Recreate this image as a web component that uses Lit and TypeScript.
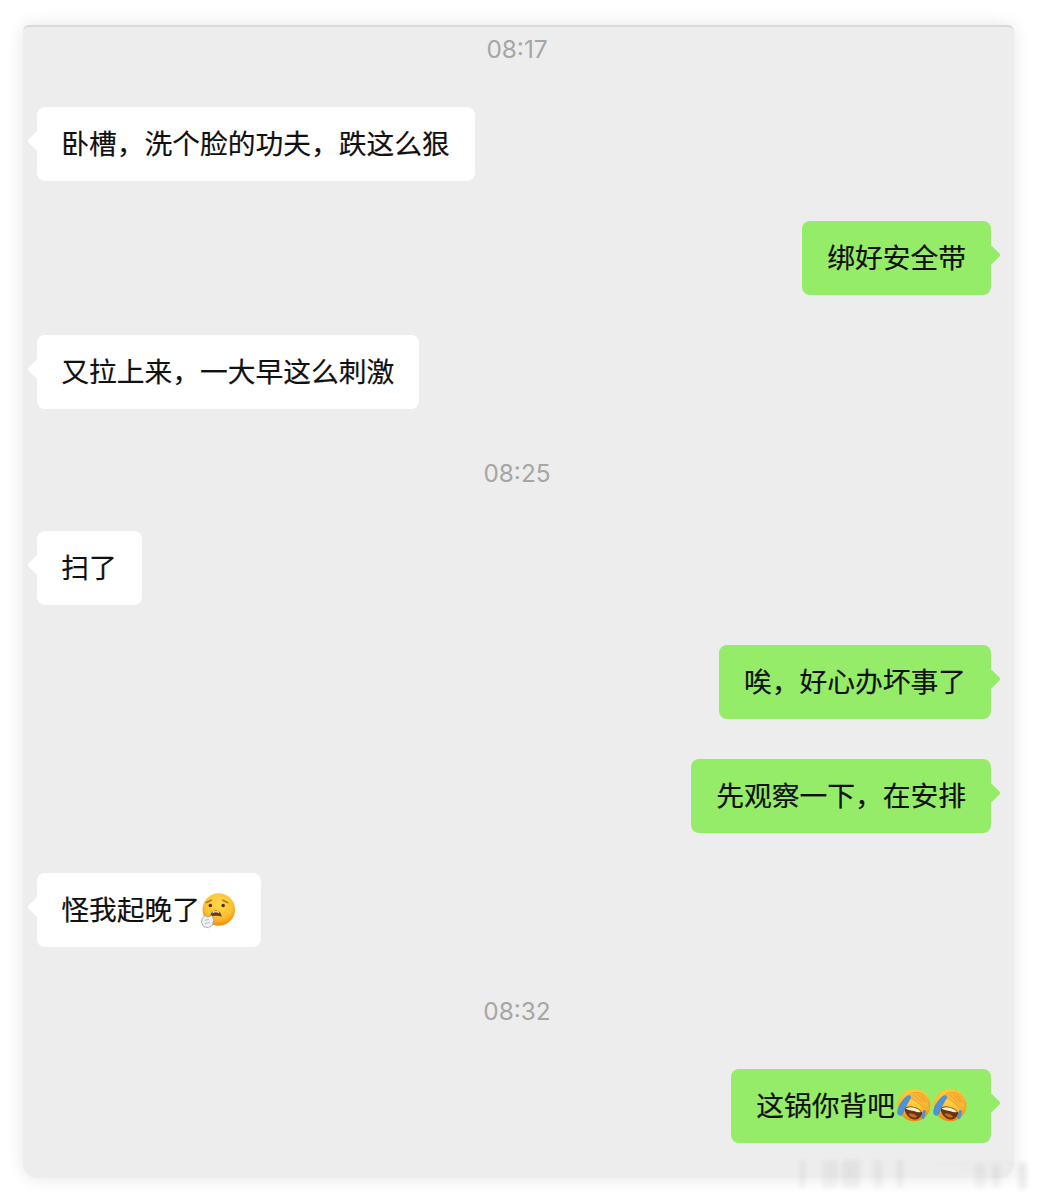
import { LitElement, html, css, svg } from "lit";
import { customElement } from "lit/decorators.js";

const sadEmoji = svg`
  <defs>
    <radialGradient id="sg" cx="50%" cy="32%" r="68%">
      <stop offset="0" stop-color="#ffd94e"/><stop offset=".65" stop-color="#fcc02e"/><stop offset="1" stop-color="#ee8c12"/>
    </radialGradient>
  </defs>
  <circle cx="19" cy="17.500" r="16.500" fill="url(#sg)"/>
  <path d="M6.500 10.500l5-2.500M28 10.500l-5-2.500" stroke="#a06a1c" stroke-width="1.300" stroke-linecap="round" fill="none"/>
  <circle cx="10.500" cy="13.500" r="1.800" fill="#4f2f10"/>
  <circle cx="23.500" cy="13.500" r="1.800" fill="#4f2f10"/>
  <path d="M10.500 25c-.2-3 2-6.500 5.500-6.500s6 3.500 6 6.500c-3-1.500-8.500-1.500-11.500 0z" fill="#6b3a12"/>
  <path d="M12.500 21.500c1.800-1.500 5.300-1.500 7.100 0l-.8-2.200h-5.500z" fill="#fff"/>
  <path d="M2 27l3-3.500 3 1.500 4-1.500 2 4.500-1.500 5.500-4 2.500-4.500-1-2.500-4z" fill="#eef0f2" stroke="#98a0a8" stroke-width=".8"/>
  <path d="M5 28.500l4-1M5 32l5-1.500" stroke="#aab0b6" stroke-width=".8"/>
`;

const cryEmoji = (id: string) => svg`
  <defs>
    <radialGradient id=${id} cx="50%" cy="30%" r="70%">
      <stop offset="0" stop-color="#ffd64a"/><stop offset=".65" stop-color="#fcbc2c"/><stop offset="1" stop-color="#ec8610"/>
    </radialGradient>
  </defs>
  <circle cx="19.500" cy="17" r="16.500" fill=${`url(#${id})`}/>
  <path d="M15 6c5-3 11-2.500 15 1.500 3 3 4.500 6.500 4.500 10-1.500 3-4 3-6 1.500-4-3.500-8.500-7-13-9-2-1-2-3-.5-4z" fill="#fbb73a" stroke="#e3901f" stroke-width=".6"/>
  <path d="M19 6.500l8 7.500M23 6l7 8M27 7l5 7.500" stroke="#e08a1e" stroke-width=".6" fill="none"/>
  <path d="M9.500 20c5.500-3 14-1.500 18.500 5 -2 5.500-6 7.500-10 6.500-4.500-1.300-8-6-8.500-11.500z" fill="#6a3410"/>
  <path d="M10.500 20.500c5-2.300 12-1 16 3.500-2.500.5-4.500.3-6.500-.7-3.500-.5-6.800-1-9.500-2.800z" fill="#fff0d2"/>
  <path d="M13.500 26c2.500-1 6.500-.5 9 2.800-2 2.200-6.500.7-9-2.800z" fill="#c26a2c"/>
  <path d="M14.800 7.500c-1.700-.4-3.300 .5-5 2.500-3.400 3.800-6 8-7 12-.7 3 .1 5 2 5.500 2 .5 3-1 4-3.500 1.200-3.500 3.500-8.500 6.500-13 1-1.400 1-3-.5-3.500z" fill="#4d93dc" stroke="#3b7ec6" stroke-width=".4"/>
  <path d="M29 21.500l2.500 1.500-2 8.500-3.500-1.500z" fill="#4d93dc"/>
`;

const ROWS: Array<{ t: "time" | "l" | "r"; text: string; emoji?: unknown[] }> = [
  { t: "time", text: "08:17" },
  { t: "l", text: "卧槽，洗个脸的功夫，跌这么狠" },
  { t: "r", text: "绑好安全带" },
  { t: "l", text: "又拉上来，一大早这么刺激" },
  { t: "time", text: "08:25" },
  { t: "l", text: "扫了" },
  { t: "r", text: "唉，好心办坏事了" },
  { t: "r", text: "先观察一下，在安排" },
  { t: "l", text: "怪我起晚了", emoji: [sadEmoji] },
  { t: "time", text: "08:32" },
  { t: "r", text: "这锅你背吧", emoji: [cryEmoji("cg1"), cryEmoji("cg2")] },
];

// Blurred watermark traces at the bottom-right corner: [left, top, width, height, opacity]
const MARKS: number[][] = [
  [800, 1160, 5, 28, 0.05], [822, 1160, 16, 28, 0.035], [842, 1160, 18, 28, 0.045], [873, 1160, 10, 28, 0.035],
  [897, 1160, 6, 28, 0.05], [975, 1164, 10, 24, 0.035], [992, 1164, 8, 24, 0.04],
  [1018, 1163, 9, 26, 0.07], [935, 1163, 92, 1, 0.07], [960, 1170, 67, 1, 0.06], [985, 1176, 42, 1, 0.08],
];

@customElement("app-root")
export class AppRoot extends LitElement {
  static styles = css`
    :host {
      display: block;
      position: relative;
      height: 1200px;
      overflow: hidden;
      background: #fff;
      font-family: "Noto Sans CJK SC", "Liberation Sans", sans-serif;
    }
    .panel {
      margin-left: 23px;
      width: 991px;
      position: absolute;
      top: 25px;
      height: 1153px;
      box-sizing: border-box;
      padding: 1px 23px 0 14px;
      background: #ededed;
      border-top: 2px solid #d8d8d8;
      border-radius: 6px 6px 14px 14px;
      box-shadow: 0 0 18px rgba(0, 0, 0, 0.1);
      display: flex;
      flex-direction: column;
    }
    .time {
      flex: none;
      height: 42px;
      margin-bottom: 37px;
      padding-left: 6px;
      display: flex;
      align-items: center;
      justify-content: center;
      font-family: Inter, "Liberation Sans", sans-serif;
      font-size: 24.4px;
      color: #a6a6a6;
    }
    .bubble + .time {
      margin-top: 3px;
    }
    .bubble {
      position: relative;
      flex: none;
      height: 74px;
      box-sizing: border-box;
      padding: 0 25px 2px 24.25px;
      margin-bottom: 40px;
      border-radius: 8px;
      display: flex;
      align-items: center;
      width: fit-content;
      font-size: 27.75px;
      line-height: 1;
      color: #111;
      white-space: nowrap;
      -webkit-text-stroke: 0.2px #111;
    }
    .bubble::before {
      content: "";
      position: absolute;
      top: 27px;
      width: 14px;
      height: 14px;
      transform: rotate(45deg);
      border-radius: 2px;
      background: inherit;
    }
    .l {
      background: #fff;
      align-self: flex-start;
    }
    .l::before {
      left: -7px;
    }
    .r {
      background: #95ec69;
      align-self: flex-end;
      padding-left: 24.8px;
    }
    .r::before {
      right: -7px;
    }
    .emoji {
      width: 35.5px;
      height: 36px;
      flex: none;
      margin-top: 2px;
      overflow: visible;
    }
    .mark {
      position: absolute;
      background: #000;
      filter: blur(2.5px);
    }
  `;

  render() {
    return html`
      <div class="panel">
        ${ROWS.map((r) =>
          r.t === "time"
            ? html`<div class="time">${r.text}</div>`
            : html`<div class="bubble ${r.t}">
                ${r.text}
                ${(r.emoji ?? []).map((e) => html`<svg class="emoji" viewBox="0 0 36 36">${e}</svg>`)}
              </div>`
        )}
      </div>
      ${MARKS.map(
        ([x, y, w, h, o]) =>
          html`<div class="mark" style="left:${x}px;top:${y}px;width:${w}px;height:${h}px;opacity:${o}"></div>`
      )}
    `;
  }
}
